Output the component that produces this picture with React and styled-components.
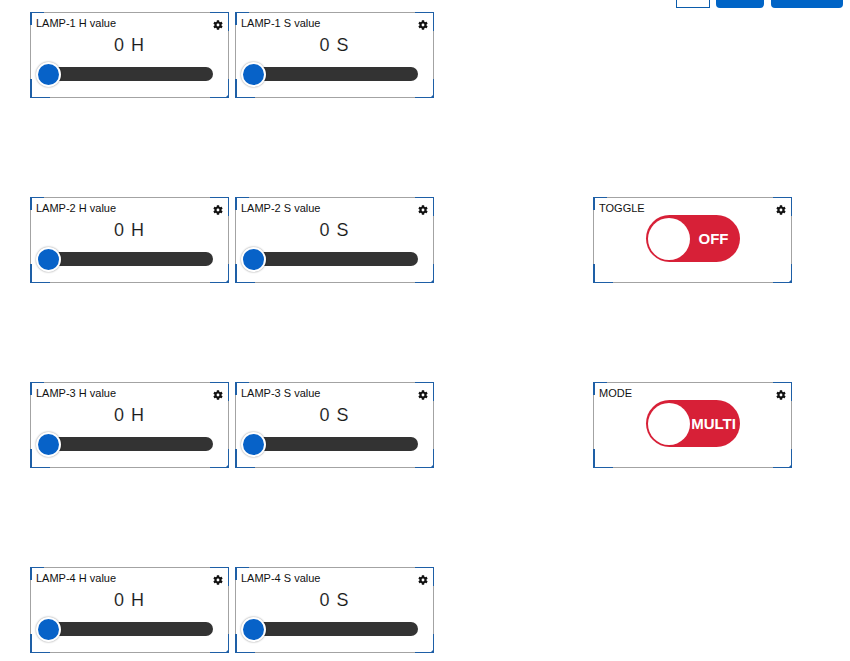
import React from "react";
import styled, { createGlobalStyle } from "styled-components";

const GlobalStyle = createGlobalStyle`
    body {
        margin: 0;
        background: #ffffff;
        font-family: "Liberation Sans", Arial, sans-serif;
    }
`;

const Page = styled.div`
    width: 850px;
    height: 661px;
    overflow: hidden;
`;

const TopBar = styled.div`
    display: flex;
    justify-content: flex-end;
    align-items: flex-start;
    gap: 6px;
    height: 8px;
    padding-right: 7px;
`;

const TopButton = styled.div`
    box-sizing: border-box;
    width: ${({ w }) => w}px;
    height: 8px;
    background: ${({ outline }) => (outline ? "#ffffff" : "#0064c6")};
    border: ${({ outline }) => (outline ? "1px solid #0b5cab" : "none")};
    border-top: none;
    border-radius: ${({ outline }) => (outline ? "0" : "0 0 4px 4px")};
    margin-left: ${({ extra }) => extra || 0}px;
`;

const Grid = styled.div`
    display: flex;
    flex-direction: column;
    gap: 99px;
    padding: 4px 0 0 30px;
`;

const Row = styled.div`
    display: flex;
    gap: 6px;
    height: 86px;
`;

const Card = styled.div`
    position: relative;
    box-sizing: border-box;
    width: 199px;
    height: 86px;
    border: 1px solid #a3a3a3;
    background: #ffffff;
    margin-left: ${({ offset }) => offset || 0}px;
`;

const Corner = styled.span`
    position: absolute;
    width: ${({ len }) => len || 14}px;
    height: ${({ len }) => len || 14}px;
    border: 0 solid #1e5fa6;
    ${({ at }) =>
        at === "tl"
            ? "top: -1px; left: -1px; border-top-width: 1px; border-left-width: 2px;"
            : at === "tr"
            ? "top: -1px; right: -1px; border-top-width: 1px; border-right-width: 1px;"
            : at === "bl"
            ? "bottom: -1px; left: -1px; border-bottom-width: 1px; border-left-width: 2px;"
            : "bottom: -1px; right: -1px; border-bottom-width: 1px; border-right-width: 1px;"}
`;

const Grip = styled.span`
    position: absolute;
    right: -1px;
    bottom: -1px;
    width: 0;
    height: 0;
    border-left: 4px solid transparent;
    border-bottom: 4px solid #1e5fa6;
`;

const Title = styled.div`
    position: absolute;
    top: 4px;
    left: 5px;
    font-size: 11px;
    color: #111111;
    white-space: nowrap;
`;

const Gear = styled.svg`
    position: absolute;
    top: 7px;
    right: 5px;
    width: 10px;
    height: 10px;
`;

const Body = styled.div`
    display: flex;
    flex-direction: column;
    align-items: center;
    padding-top: 21px;
`;

const Value = styled.div`
    font-size: 18px;
    letter-spacing: 1px;
    color: #1a1a1a;
    line-height: 22px;
    -webkit-text-stroke: 0.1px #ffffff;
`;

const Track = styled.div`
    position: relative;
    align-self: flex-start;
    margin: 11px 0 0 9px;
    width: 173px;
    height: 14px;
    border-radius: 7px;
    background: #333333;
`;

const Thumb = styled.div`
    position: absolute;
    top: -5px;
    left: ${({ pos }) => pos}px;
    box-sizing: border-box;
    width: 25px;
    height: 25px;
    border-radius: 50%;
    background: #0762c8;
    border: 2px solid #ffffff;
    box-shadow: 0 0 2px rgba(0, 0, 0, 0.45);
`;

const SwitchWrap = styled.div`
    display: flex;
    justify-content: center;
    padding-top: 17px;
`;

const Pill = styled.div`
    display: flex;
    align-items: center;
    width: 94px;
    height: 47px;
    box-sizing: border-box;
    padding: 0 0 0 2px;
    border-radius: 24px;
    background: #d72037;
`;

const Knob = styled.div`
    flex: none;
    width: 42px;
    height: 42px;
    border-radius: 50%;
    background: #ffffff;
`;

const PillLabel = styled.div`
    flex: 1;
    display: flex;
    justify-content: center;
    font-size: 15px;
    font-weight: bold;
    color: #ffffff;
    white-space: nowrap;
    margin-right: 2px;
`;

function GearIcon() {
    return (
        <Gear viewBox="2.5 1.8 19 20.4">
            <path
                fill="#111"
                d="M19.14 12.94c.04-.3.06-.61.06-.94 0-.32-.02-.64-.07-.94l2.03-1.58a.49.49 0 0 0 .12-.61l-1.92-3.32a.49.49 0 0 0-.59-.22l-2.39.96c-.5-.38-1.03-.7-1.62-.94l-.36-2.54a.48.48 0 0 0-.48-.41h-3.84c-.24 0-.43.17-.47.41l-.36 2.54c-.59.24-1.13.57-1.62.94l-2.39-.96c-.22-.08-.47 0-.59.22L2.74 8.87c-.12.21-.08.47.12.61l2.03 1.58c-.05.3-.09.63-.09.94s.02.64.07.94l-2.03 1.58a.49.49 0 0 0-.12.61l1.92 3.32c.12.22.37.29.59.22l2.39-.96c.5.38 1.03.7 1.62.94l.36 2.54c.05.24.24.41.48.41h3.84c.24 0 .44-.17.47-.41l.36-2.54c.59-.24 1.13-.56 1.62-.94l2.39.96c.22.08.47 0 .59-.22l1.92-3.32c.12-.22.07-.47-.12-.61l-2.01-1.58zM12 14.9a2.9 2.9 0 1 1 0-5.8 2.9 2.9 0 0 1 0 5.8z"
            />
        </Gear>
    );
}

function Frame({ title, offset, children }) {
    return (
        <Card offset={offset}>
            <Corner at="tl" len={12} />
            <Corner at="tr" len={18} />
            <Corner at="bl" len={18} />
            <Corner at="br" len={18} />
            <Grip />
            <Title>{title}</Title>
            <GearIcon />
            {children}
        </Card>
    );
}

function SliderCard({ title, value, unit }) {
    return (
        <Frame title={title}>
            <Body>
                <Value>
                    {value} {unit}
                </Value>
                <Track>
                    <Thumb pos={-4} />
                </Track>
            </Body>
        </Frame>
    );
}

function SwitchCard({ title, label }) {
    return (
        <Frame title={title} offset={153}>
            <SwitchWrap>
                <Pill>
                    <Knob />
                    <PillLabel>{label}</PillLabel>
                </Pill>
            </SwitchWrap>
        </Frame>
    );
}

const rows = [
    { lamp: "LAMP-1" },
    { lamp: "LAMP-2", toggle: { title: "TOGGLE", label: "OFF" } },
    { lamp: "LAMP-3", toggle: { title: "MODE", label: "MULTI" } },
    { lamp: "LAMP-4" },
];

export default function App() {
    return (
        <Page>
            <GlobalStyle />
            <TopBar>
                <TopButton w={34} outline />
                <TopButton w={48} />
                <TopButton w={72} extra={1} />
            </TopBar>
            <Grid>
                {rows.map(({ lamp, toggle }) => (
                    <Row key={lamp}>
                        <SliderCard title={`${lamp} H value`} value="0" unit="H" />
                        <SliderCard title={`${lamp} S value`} value="0" unit="S" />
                        {toggle && <SwitchCard {...toggle} />}
                    </Row>
                ))}
            </Grid>
        </Page>
    );
}
